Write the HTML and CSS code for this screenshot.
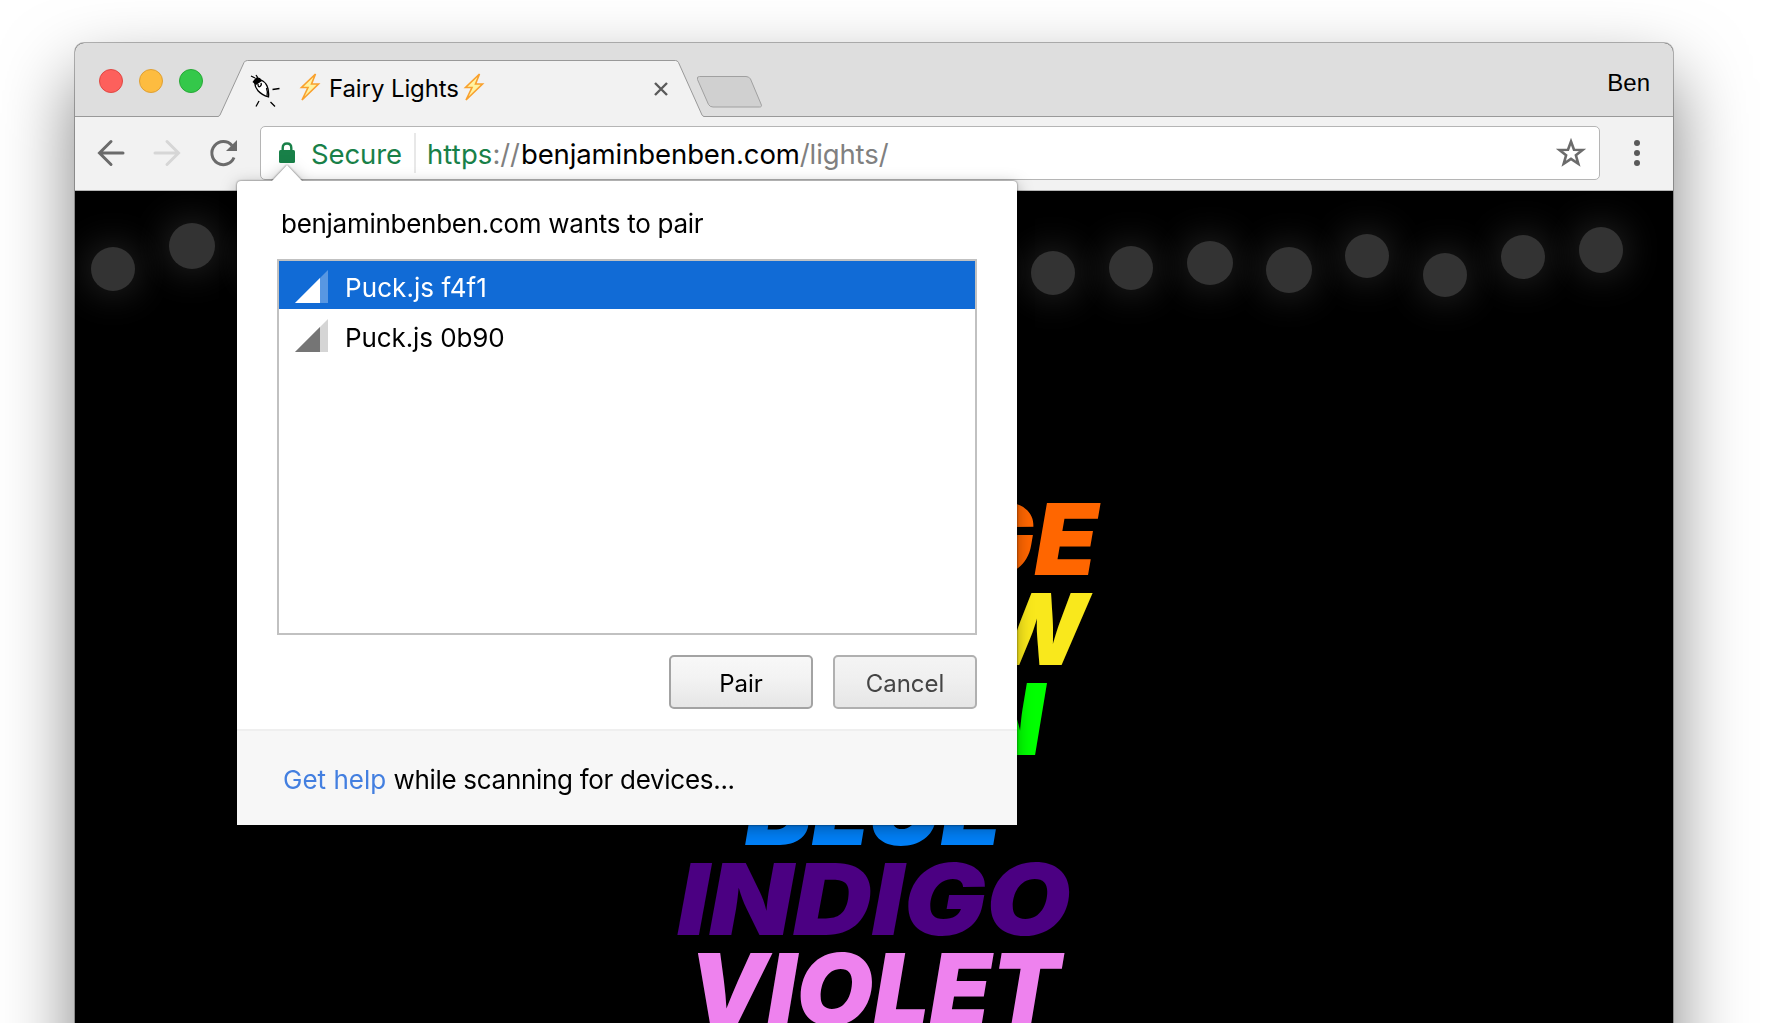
FILE: index.html
```html
<!DOCTYPE html>
<html lang="en">
<head>
<meta charset="utf-8">
<title>Fairy Lights</title>
<link rel="stylesheet" href="styles.css">
</head>
<body>
<div class="window">
  <header class="tabstrip">
    <div class="traffic"><i class="red"></i><i class="amber"></i><i class="green"></i></div>
    <div class="tab">
      <svg class="tab-shape" width="484" height="58" viewBox="0 0 484 58"><path d="M-2 56.500Q-.5 56 0 55L24 2.500Q25 .5 27.500.5H455.500Q457.500.5 458.500 2.500L482 55Q482.500 56 484 56.500V58H-2Z" fill="#f2f2f2"/><path d="M-2 56.500Q-.5 56 0 55L24 2.500Q25 .5 27.500.5H455.500Q457.500.5 458.500 2.500L482 55Q482.500 56 484 56.500" fill="none" stroke="#999"/></svg>
      <svg class="favicon" width="32" height="32" viewBox="0 0 32 32" fill="none" stroke="#000" stroke-width="1.300"><path d="M5 9C4.500 14 9 20 18.500 23C19.500 14 16 8 11 6Z" fill="#fff"/><path d="M16.500 14Q18 18 17 22M8 10Q8 13.500 10 12.500Q12 11 11 9"/><path d="M2.500 8L6 3.500L10 4L12 7L6 11Z" fill="#000" stroke="none"/><path d="M5 4L1 2M8 4L6 1M22.500 15.500L29.500 14.500M9 27L6 32.500M20.500 28L25 32.500"/></svg>
      <div class="tab-title">
        <svg class="bolt" width="20" height="30" viewBox="0 0 20 30"><path d="M15.500 2L1.500 15.500H8L2 28L18.500 12H11.500Z" fill="#fff3a0" stroke="#f9a12e" stroke-width="1.600"/></svg>
        <span>Fairy Lights</span>
        <svg class="bolt" width="20" height="30" viewBox="0 0 20 30"><path d="M15.500 2L1.500 15.500H8L2 28L18.500 12H11.500Z" fill="#fff3a0" stroke="#f9a12e" stroke-width="1.600"/></svg>
      </div>
      <svg class="close" width="14" height="14" viewBox="0 0 14 14"><path d="M1 1L13 13M13 1L1 13" stroke="#5a5a5a" stroke-width="2.400"/></svg>
    </div>
    <svg class="newtab" width="67" height="32" viewBox="0 0 67 32"><path d="M3.500.5H50Q53 .5 54.500 3L65 28Q66.500 31 63.500 31H17Q14 31 12.500 28.500L1.500 3.500Q.5.5 3.500.5Z" fill="#d0d0d0" stroke="#a0a0a0"/></svg>
    <span class="profile">Ben</span>
  </header>

  <nav class="toolbar">
    <svg class="nav" width="28" height="28" viewBox="0 0 28 28" fill="none" stroke="#6b6b6b" stroke-width="3" stroke-linecap="round"><path d="M26 14H3M14 2.500L2.500 14L14 25.500"/></svg>
    <svg class="nav" width="28" height="28" viewBox="0 0 28 28" fill="none" stroke="#d6d6d6" stroke-width="3" stroke-linecap="round"><path d="M2 14H25M14 2.500L25.500 14L14 25.500"/></svg>
    <svg class="nav" width="28" height="28" viewBox="0 0 28 28"><path d="M23 6.500A11.500 11.500 0 1 0 25 18.500" fill="none" stroke="#6b6b6b" stroke-width="3"/><path d="M28 1V12H17Z" fill="#6b6b6b"/></svg>
    <div class="omnibox">
      <svg class="lock" width="16" height="22" viewBox="0 0 16 22"><path d="M3.700 9V6Q3.700 1.500 8 1.500T12.300 6V9" fill="none" stroke="#188048" stroke-width="2.400"/><rect y="8" width="16" height="13" rx="1.500" fill="#188048"/></svg>
      <span class="secure">Secure</span>
      <span class="url"><b>https</b>://<em>benjaminbenben.com</em>/lights/</span>
      <svg class="star" width="30" height="30" viewBox="0 0 30 30"><path d="M15 3.500L18 11.700L26.600 12L19.900 17.300L22.300 25.800L15 20.900L7.700 25.800L10.100 17.300L3.400 12L12 11.700Z" fill="none" stroke="#6b6b6b" stroke-width="2.600"/></svg>
    </div>
    <div class="menu"><i></i><i></i><i></i></div>
  </nav>

  <main class="page">
    <div class="lights">
      <i style="--y:56px"></i><i class="big" style="--y:32px"></i><i style="--y:48px"></i><i style="--y:60px"></i><i style="--y:52px"></i><i style="--y:44px"></i><i style="--y:58px"></i><i style="--y:50px"></i><i style="--y:46px"></i><i style="--y:55px"></i><i style="--y:50px"></i><i style="--y:56px"></i><i style="--y:60px"></i><i style="--y:55px"></i><i class="wide" style="--y:50px"></i><i class="big" style="--y:56px"></i><i class="nudge" style="--y:43px"></i><i class="nudge" style="--y:62px"></i><i style="--y:44px"></i><i class="tall" style="--y:36px"></i>
    </div>
    <div class="colours">
      <p class="orange">ORANGE</p>
      <p class="yellow">YELLOW</p>
      <p class="lime">GREEN</p>
      <p class="blue">BLUE</p>
      <p class="indigo">INDIGO</p>
      <p class="violet">VIOLET</p>
    </div>
  </main>

  <section class="popup">
    <h1>benjaminbenben.com wants to pair</h1>
    <ul class="devices">
      <li class="selected"><svg width="33" height="33" viewBox="0 0 33 33"><path d="M33 0V33H0Z" opacity=".3"/><path d="M25 8V33H0Z"/></svg><span>Puck.js f4f1</span></li>
      <li><svg width="33" height="33" viewBox="0 0 33 33"><path d="M33 0V33H0Z" opacity=".3"/><path d="M25 8V33H0Z"/></svg><span>Puck.js 0b90</span></li>
    </ul>
    <div class="actions"><button>Pair</button><button class="cancel">Cancel</button></div>
    <footer><a>Get help</a> <span>while scanning for devices...</span></footer>
  </section>
</div>
</body>
</html>
```

FILE: styles.css
```css
* { box-sizing: border-box; margin: 0; padding: 0; }
html { overflow: hidden; }
body { height: 1023px; padding: 43px 112px 0 75px; overflow: hidden; background: #fff; font-family: Inter, "Liberation Sans", sans-serif; color: #000; }
svg { display: block; flex: none; overflow: visible; }
.window { position: relative; display: flex; flex-direction: column; width: 1598px; height: 1200px; border-radius: 9px 9px 0 0; background: #000; box-shadow: 0 0 0 1px rgba(0,0,0,.28), 0 34px 72px rgba(0,0,0,.5); }

.tabstrip { display: flex; align-items: flex-start; height: 74px; flex: none; background: #dedede; border-bottom: 1px solid #999; border-radius: 9px 9px 0 0; }
.traffic { display: flex; gap: 16px; padding: 26px 0 0 24px; width: 145px; }
.traffic i { width: 24px; height: 24px; border-radius: 50%; border: 1px solid; }
.traffic .red { background: #fd605c; border-color: #e04843; }
.traffic .amber { background: #fdbc40; border-color: #dfa034; }
.traffic .green { background: #34c84a; border-color: #27a936; }
.tab { position: relative; display: flex; align-items: center; width: 484px; height: 57px; margin-top: 17px; padding: 0 36px 0 30px; }
.tab-shape { position: absolute; left: 0; top: 0; }
.favicon { position: relative; margin-top: 2px; }
.tab-title { position: relative; display: flex; align-items: center; margin-left: 18px; flex: 1; font-size: 24px; line-height: 30px; }
.tab-title span { width: 129px; margin: 1px 6px 0 9px; white-space: nowrap; letter-spacing: -.1px; }
.bolt { margin-top: -3px; }
.close { position: relative; }
.newtab { margin: 33px 0 0 -8px; }
.profile { margin: 25px 23px 0 auto; font: 24px/30px "Liberation Sans", sans-serif; }

.toolbar { display: flex; align-items: center; height: 74px; flex: none; padding: 0 33px 2px 22px; background: #f2f2f2; border-bottom: 1px solid #b5b5b5; }
.nav { margin-right: 28px; }
.omnibox { display: flex; align-items: center; width: 1340px; height: 54px; margin-left: -5px; padding: 0 13px 0 18px; background: #fff; border: 1px solid #b5b5b5; border-radius: 5px; font-size: 27.500px; letter-spacing: -.1px; }
.lock { margin: 0 16px 0 0; }
.secure { width: 105px; height: 40px; line-height: 42px; color: #188048; border-right: 2px solid #e8e8e8; }
.url { flex: 1; padding: 2px 0 0 11px; line-height: 42px; color: #808080; }
.url b { font-weight: 400; color: #188048; letter-spacing: .1px; }
.url em { margin-left: 1px; font-style: normal; color: #000; }
.menu { display: flex; flex-direction: column; gap: 4px; margin-left: auto; }
.menu i { width: 6px; height: 6px; border-radius: 50%; background: #5a5a5a; }

.page { flex: 1; background: #000; }
.lights { display: flex; justify-content: space-between; align-items: flex-start; height: 303px; padding: 0 50px 0 16px; }
.lights i { width: 44px; height: 44px; margin-top: var(--y); border-radius: 50%; background: #333; box-shadow: 0 0 40px rgba(255,255,255,.2); }
.lights .big { width: 46px; height: 46px; margin-right: -2px; }
.lights .wide { width: 46px; margin-right: -2px; }
.lights .tall { height: 46px; }
.lights .nudge { margin-left: 1px; margin-right: -1px; }
.colours { text-align: center; font: italic 900 99px/90px Inter, sans-serif; }
.orange { color: #ff6600; transform: scaleX(1.032); }
.yellow { color: #f9e81c; }
.lime { color: #00ff00; }
.blue { color: #0080f8; transform: scaleX(1.012); }
.indigo { color: #4b0082; transform: scaleX(1.103); }
.violet { color: #ee82ee; transform: scaleX(1.004); }

.popup { position: absolute; left: 162px; top: 138px; display: flex; flex-direction: column; width: 780px; height: 644px; background: #fff; border-radius: 4px 4px 0 0; font-size: 26px; filter: drop-shadow(0 0 1px rgba(0,0,0,.6)) drop-shadow(0 4px 8px rgba(0,0,0,.3)); }
.popup::before { content: ""; position: absolute; left: 34px; top: -16px; width: 32px; height: 17px; background: #fff; clip-path: polygon(50% 0, 100% 100%, 0 100%); }
.popup h1 { margin: 26px 0 0 44px; font-size: 26px; line-height: 34px; font-weight: 400; letter-spacing: -.28px; }
.devices { list-style: none; width: 700px; height: 376px; margin: 18px 0 0 40px; border: 2px solid #c1c1c1; }
.devices li { display: flex; align-items: center; gap: 17px; height: 50px; padding: 2px 0 0 16px; fill: #757575; letter-spacing: -.1px; }
.devices span { margin-top: 5px; }
.devices li.selected { height: 48px; padding-top: 3px; background: #116bd6; color: #fff; fill: #fff; letter-spacing: .08px; }
.devices .selected span { margin-top: 1px; }
.actions { display: flex; justify-content: flex-end; gap: 20px; margin: 20px 40px 20px 0; }
.actions button { width: 144px; height: 54px; padding-top: 2px; border: 2px solid #a3a3a3; border-radius: 5px; background: linear-gradient(#f8f8f8, #f3f3f3 40%, #e6e6e6); font: 24px Inter, sans-serif; color: #000; }
.actions .cancel { border-color: #b0b0b0; color: #444; background: linear-gradient(#f4f4f4, #f0f0f0 40%, #e6e6e6); }
.popup footer { flex: 1; padding: 32px 0 0 46px; border-top: 2px solid #efefef; background: #f7f7f7; line-height: 34px; }
.popup footer a { color: #437fe0; }
.popup footer span { letter-spacing: -.3px; }
```
